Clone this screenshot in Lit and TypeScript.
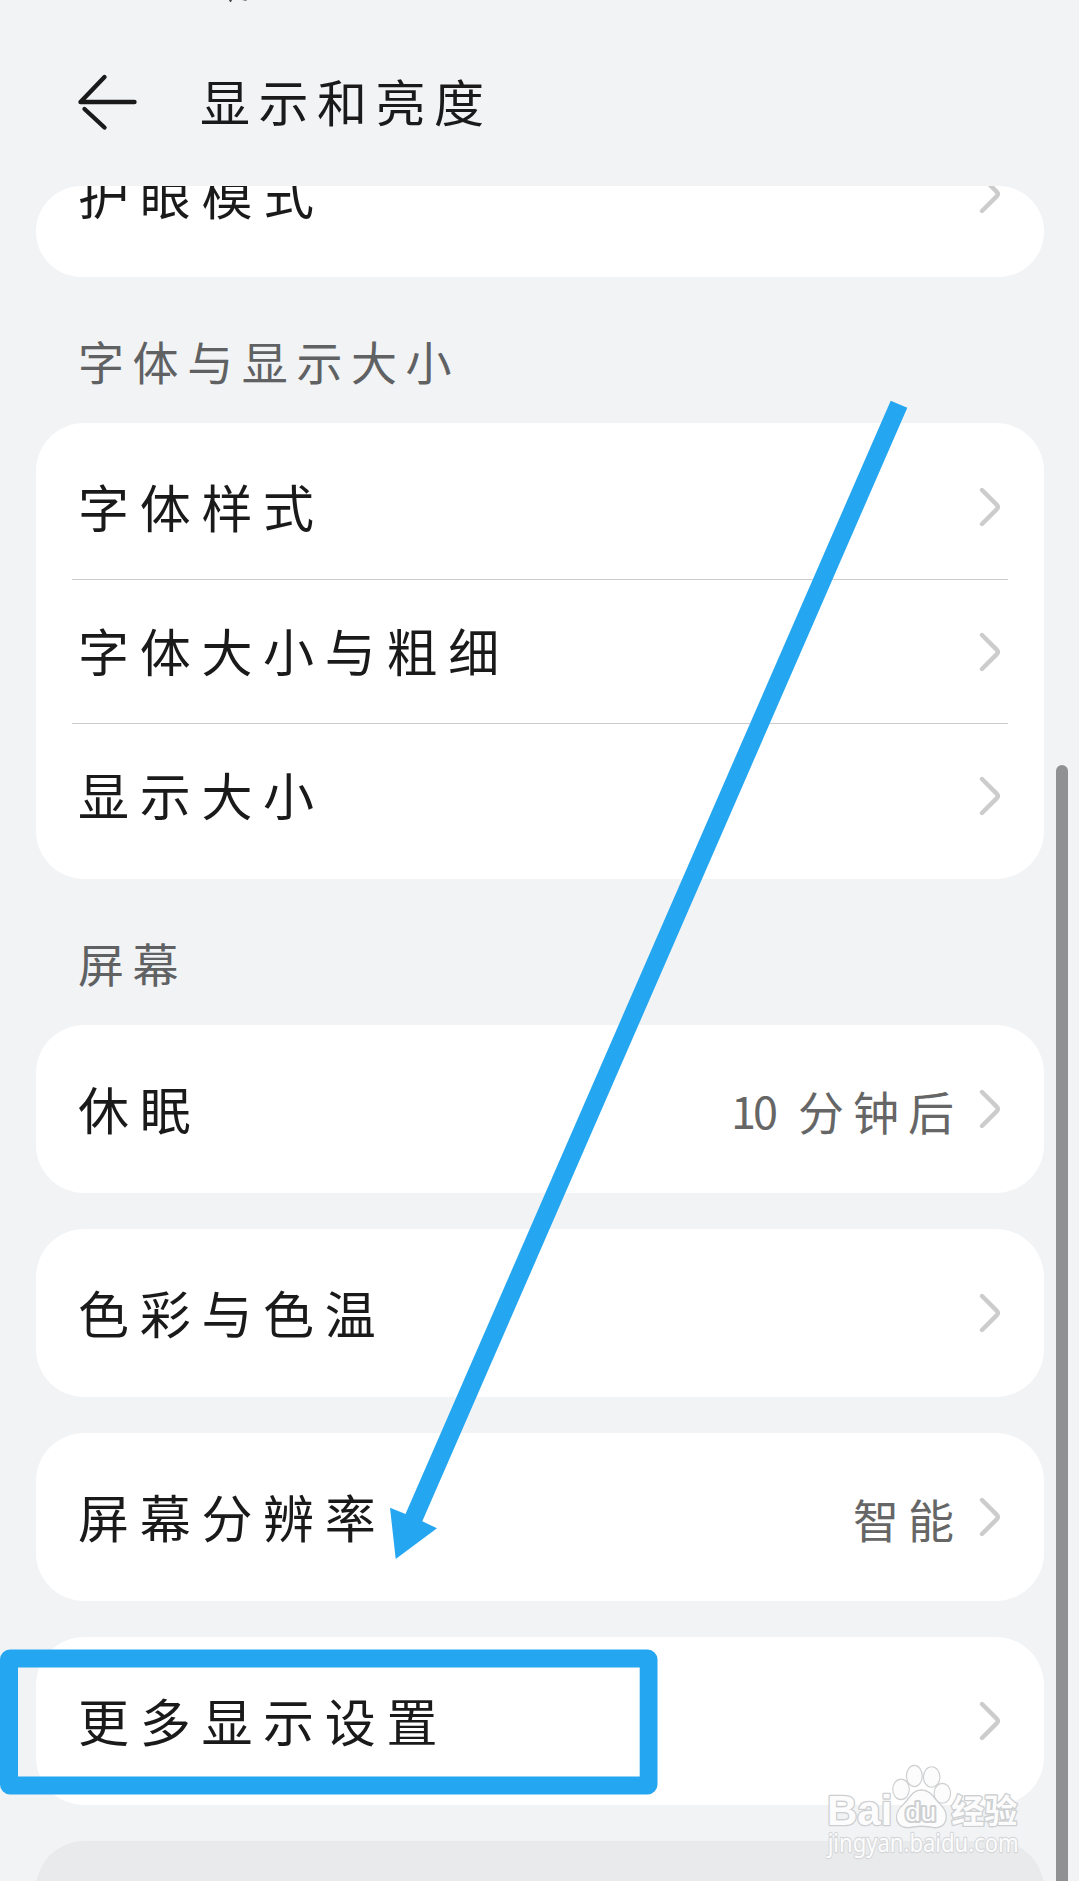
import { LitElement, html, css, svg, nothing } from "lit";
import { customElement, property } from "lit/decorators.js";

interface Row {
  label: string;
  digits?: string;
  value?: string;
}

@customElement("setting-row")
class SettingRow extends LitElement {
  @property() label = "";
  @property() digits = "";
  @property() value = "";

  static styles = css`
    :host {
      display: flex;
      align-items: center;
      box-sizing: border-box;
      height: 144px;
      padding: 0 6px 0 6px;
      white-space: nowrap;
    }
    .label {
      flex: 1;
      font-size: 51px;
      line-height: 72px;
      letter-spacing: 10.7px;
      color: #1a1a1a;
      padding-bottom: 3px;
    }
    .value {
      display: flex;
      align-items: center;
      font-size: 46px;
      line-height: 64px;
      letter-spacing: 9px;
      color: #666;
      margin-right: 15px;
      padding-top: 1px;
    }
    .digits {
      font-size: 45px;
      letter-spacing: -3px;
      margin-right: 23px;
    }
    .chevron {
      display: block;
      width: 24px;
      height: 40px;
    }
  `;

  render() {
    return html`
      <span class="label">${this.label}</span>
      ${this.value
        ? html`<span class="value"
            >${this.digits ? html`<span class="digits">${this.digits}</span>` : nothing}<span>${this.value}</span></span
          >`
        : nothing}
      <svg class="chevron" viewBox="0 0 24 40" fill="none" stroke="#ccc" stroke-width="4.4" stroke-linecap="round">
        <path d="M4 3 L18.6 17.6 Q21 20 18.6 22.4 L4 37" />
      </svg>
    `;
  }
}

const fontRows: Row[] = [{ label: "字体样式" }, { label: "字体大小与粗细" }, { label: "显示大小" }];

const screenCards: Row[] = [
  { label: "休眠", digits: "10", value: "分钟后" },
  { label: "色彩与色温" },
  { label: "屏幕分辨率", value: "智能" },
  { label: "更多显示设置" },
];

const toes = [
  [363, 268, 23, 29],
  [403, 228, 22, 30],
  [455, 231, 23, 29],
  [487, 280, 23, 28],
];

@customElement("app-root")
class AppRoot extends LitElement {
  static styles = css`
    :host {
      display: block;
      font-family: "Noto Sans CJK SC", sans-serif;
      font-weight: 400;
    }
    .screen {
      position: relative;
      width: 1079px;
      height: 1881px;
      overflow: hidden;
      background: #f1f3f5;
      display: flex;
      flex-direction: column;
    }
    .header {
      flex: none;
      box-sizing: border-box;
      height: 186px;
      padding: 18px 0 0 76px;
      display: flex;
      align-items: center;
      gap: 62px;
    }
    .back {
      width: 62px;
      height: 60px;
      display: block;
    }
    .title {
      font-size: 50px;
      line-height: 72px;
      letter-spacing: 8.5px;
      color: #1a1a1a;
      font-weight: 400;
      margin: 0;
      padding-bottom: 4px;
    }
    .list {
      flex: 1;
      min-height: 0;
      overflow: hidden;
      padding: 0 35px 0 36px;
      display: flex;
      flex-direction: column;
    }
    .card {
      flex: none;
      box-sizing: border-box;
      background: #fff;
      border-radius: 48px;
      padding: 12px 36px;
    }
    .clipped {
      height: 91px;
      padding: 0 36px 11px;
      overflow: hidden;
      display: flex;
      flex-direction: column;
      justify-content: flex-end;
    }
    .clipped setting-row {
      flex: none;
    }
    .divided {
      height: 145px;
      border-bottom: 1px solid #ccc;
    }
    .divided + .divided {
      height: 144px;
    }
    .last {
      height: 143px;
    }
    .group-three {
      height: 456px;
    }
    .section {
      flex: none;
      box-sizing: border-box;
      height: 146px;
      padding: 19px 0 0 42px;
      display: flex;
      align-items: center;
      font-size: 46px;
      letter-spacing: 8.6px;
      color: #606163;
      font-weight: 400;
      margin: 0;
    }
    .stack {
      display: flex;
      flex-direction: column;
      gap: 36px;
    }
    .muted {
      height: 168px;
      background: #e9eaeb;
    }
    .overlay {
      position: absolute;
      left: 0;
      top: 0;
      pointer-events: none;
    }
    .scrollbar {
      position: absolute;
      left: 1056px;
      top: 765px;
      width: 12px;
      height: 1140px;
      border-radius: 6px;
      background: #909193;
    }
    .mark {
      position: absolute;
      left: 826px;
      top: 1763px;
      width: 198px;
      height: 100px;
    }
  `;

  render() {
    return html`
      <div class="screen">
        <header class="header">
          <svg class="back" viewBox="0 0 62 60" fill="none" stroke="#1a1a1a" stroke-width="4.4" stroke-linecap="round">
            <path d="M58.5 30 H4.5 L28.5 5" stroke-linejoin="round" />
            <path d="M8.5 37 L28.5 55.5" />
          </svg>
          <h1 class="title">显示和亮度</h1>
        </header>
        <main class="list">
          <div class="card clipped"><setting-row label="护眼模式"></setting-row></div>
          <h2 class="section">字体与显示大小</h2>
          <div class="card group-three">
            ${fontRows.map(
              (r, i) => html`<setting-row class=${i < 2 ? "divided" : "last"} .label=${r.label}></setting-row>`
            )}
          </div>
          <h2 class="section">屏幕</h2>
          <div class="stack">
            ${screenCards.map(
              (r) => html`<div class="card">
                <setting-row .label=${r.label} .digits=${r.digits ?? ""} .value=${r.value ?? ""}></setting-row>
              </div>`
            )}
            <div class="card muted"></div>
          </div>
        </main>
        <div class="scrollbar"></div>
        <svg class="overlay" width="1079" height="1881" viewBox="0 0 1079 1881">
          <path d="M229 0 h3 l-1 2 h-1z M242 0 l4 .8 1 -.8z" fill="#444" />
          <path
            d="M890.7 400.7 L907.3 407.7 L422.3 1521.3 L437 1528.3 L395.7 1559 L390 1507.7 L405.5 1514 Z"
            fill="#25a6f1"
          />
          <path
            fill="#25a6f1"
            fill-rule="evenodd"
            d="M10 1649.5 H647.5 a10 10 0 0 1 10 10 V1784.5 a10 10 0 0 1 -10 10 H10 a10 10 0 0 1 -10 -10 V1659.5 a10 10 0 0 1 10 -10 Z M18 1667.5 V1776.5 H639.7 V1667.5 Z"
          />
        </svg>
        <svg class="mark" viewBox="138 189 594 300">
          <g fill="#fcfcfd" stroke="#cdcfd1" stroke-width="8" paint-order="stroke" stroke-linejoin="round">
            ${toes.map(([x, y, rx, ry]) => svg`<ellipse cx=${x} cy=${y} rx=${rx} ry=${ry} stroke-width="7"></ellipse>`)}
            <path
              d="M424 272 C450 272 460 294 475 310 C492 326 500 342 496 358 C491 382 467 384 450 379 C432 376 416 376 400 379 C378 384 357 380 352 358 C349 340 358 326 374 312 C390 296 398 272 424 272 Z"
            />
            <text
              x="141" y="376" font-size="130" font-weight="700" font-family="Liberation Sans, sans-serif"
              textLength="196" lengthAdjust="spacingAndGlyphs"
            >Bai</text>
            <text
              x="376" y="362" font-size="80" font-weight="400" font-family="Liberation Sans, sans-serif"
              textLength="92" lengthAdjust="spacingAndGlyphs" stroke-width="12"
            >du</text>
            <text
              x="514" y="370" font-size="99" font-weight="700" font-family="Noto Sans CJK SC, sans-serif"
            >经验</text>
            <text
              x="143" y="455" font-size="78" font-weight="400" font-family="Noto Sans, sans-serif"
              textLength="573" lengthAdjust="spacingAndGlyphs" stroke="#d6d8da" stroke-width="7"
            >jingyan.baidu.com</text>
          </g>
        </svg>
      </div>
    `;
  }
}
